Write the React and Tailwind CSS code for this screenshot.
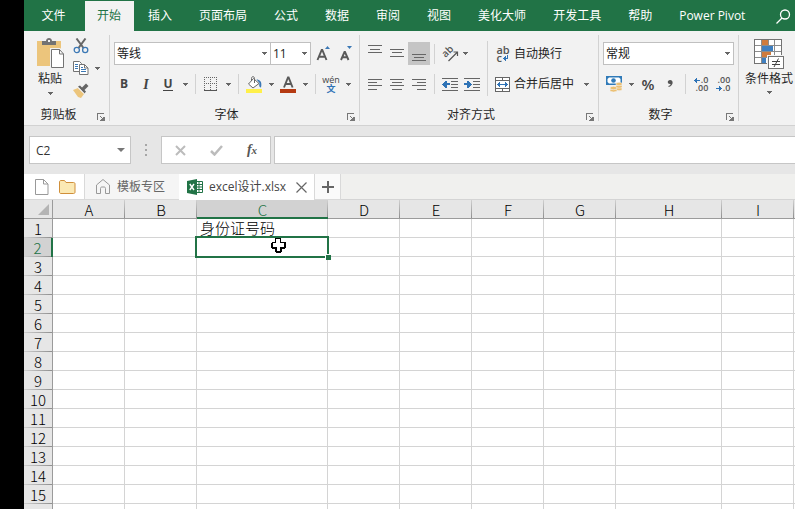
import React from "react";

const UI_FONT = "font-['Open_Sans','Noto_Sans_CJK_SC',sans-serif]";
const GRID_FONT = "font-['Noto_Sans_CJK_SC',sans-serif]";

const MENU = ["开始", "插入", "页面布局", "公式", "数据", "审阅", "视图", "美化大师", "开发工具", "帮助", "Power Pivot"];

const COLUMNS = [
  { name: "A", col: "w-[72px]" },
  { name: "B", col: "w-[72px]" },
  { name: "C", col: "w-[131px]" },
  { name: "D", col: "w-[72px]" },
  { name: "E", col: "w-[72px]" },
  { name: "F", col: "w-[72px]" },
  { name: "G", col: "w-[72px]" },
  { name: "H", col: "w-[106px]" },
  { name: "I", col: "w-[72px]" },
  { name: "", col: "w-[72px]" },
];

const ROWS = Array.from({ length: 15 }, (_, i) => i + 1);
const CELLS = { C1: "身份证号码" };

/* ---------- small building blocks ---------- */

function Caret() {
  return (
    <svg width="5" height="3" viewBox="0 0 5 3" shapeRendering="crispEdges" aria-hidden="true">
      <path d="M0 0h5v1H4v1H3v1H2V2H1V1H0z" fill="#666" />
    </svg>
  );
}

function CaretButton({ label, narrow }) {
  return (
    <button type="button" aria-label={label} className={`flex h-full items-center justify-center ${narrow ? "w-2" : "w-3"}`}>
      <Caret />
    </button>
  );
}

function Tool({ label, active, children }) {
  return (
    <button
      type="button"
      aria-label={label}
      className={`flex h-full w-[22px] shrink-0 items-center justify-center text-[#444] ${active ? "bg-[#c5c5c5]" : ""}`}
    >
      {children}
    </button>
  );
}

function Sep() {
  return <span className="mx-1 h-5 w-px shrink-0 bg-[#d2d2d2]" />;
}

function Divider() {
  return <span className="mt-1 h-[86px] w-px shrink-0 bg-[#d2d2d2]" />;
}

function Picker({ label, value, width }) {
  return (
    <div className={`relative h-[23px] shrink-0 ${width}`}>
      <select
        aria-label={label}
        defaultValue={value}
        className="block h-full w-full appearance-none border border-[#c0c0c0] bg-white pl-0.5 text-[12px] text-[#222]"
      >
        <option>{value}</option>
      </select>
      <span className="pointer-events-none absolute inset-y-0 right-1 flex items-center">
        <Caret />
      </span>
    </div>
  );
}

function Group({ title, width, children }) {
  return (
    <section aria-label={title} className={`flex shrink-0 flex-col ${width}`}>
      {children}
      <div className="mt-auto flex h-5 items-start">
        <span className="flex-1 text-center leading-5">{title}</span>
        <button type="button" aria-label={`${title}设置`} className="flex h-5 w-4 items-center justify-center pt-1">
          <svg width="8" height="8" viewBox="0 0 8 8" fill="#777" shapeRendering="crispEdges">
            <path d="M0 0h7v1H1v6H0zM3 3h1v1h1v1h1V4h1v3H4V6h1V5H4V4H3zM7 4h1v4H3V7h4z" />
          </svg>
        </button>
      </div>
    </section>
  );
}

function Lines({ rows, h = 16 }) {
  return (
    <svg width="14" height={h} viewBox={`0 0 14 ${h}`} fill="#666" shapeRendering="crispEdges">
      {rows.map(([x, y, w]) => (
        <rect key={y} x={x} y={y} width={w} height="1" />
      ))}
    </svg>
  );
}

/* ---------- ribbon icons ---------- */

function PasteIcon() {
  return (
    <svg width="30" height="32" viewBox="0 0 30 32">
      <rect x="2" y="3" width="24" height="25" fill="#ecc57c" />
      <path d="M7 7V3h4c0-4 6-4 6 0h4v4z" fill="#737373" />
      <rect x="13" y="2" width="2" height="2" fill="#f2f2f2" />
      <path d="M16.500 11.500h8l4 4.500v13.500h-12z" fill="#fff" stroke="#f2f2f2" strokeWidth="3" />
      <path d="M16.500 11.500h8l4 4.500v13.500h-12z" fill="#fff" stroke="#737373" />
      <path d="M24.500 11.500v4.500h4" fill="none" stroke="#737373" />
    </svg>
  );
}

function CutIcon() {
  return (
    <svg width="16" height="16" viewBox="0 0 16 16" fill="none">
      <path d="M3.500 0.500L10.500 10M12.500 0.500L5.500 10" stroke="#666" strokeWidth="2" />
      <circle cx="3.800" cy="12" r="2.600" stroke="#3b78b5" strokeWidth="1.300" />
      <circle cx="12.200" cy="12" r="2.600" stroke="#3b78b5" strokeWidth="1.300" />
    </svg>
  );
}

function CopyIcon() {
  return (
    <svg width="16" height="15" viewBox="0 0 16 15" fill="none">
      <path d="M0.500 0.500h6l2 2v8h-8z" fill="#fff" stroke="#737373" />
      <path d="M2 3.500h3M2 5.500h3M2 7.500h3" stroke="#3b78b5" />
      <path d="M6.500 3.500h5l3.500 3.500v6.500H6.500z" fill="#fff" stroke="#737373" />
      <path d="M11.500 3.500V7H15" stroke="#737373" />
      <path d="M8 6.500h2M8 8.500h5M8 10.500h5" stroke="#3b78b5" />
    </svg>
  );
}

function BrushIcon() {
  return (
    <svg width="16" height="15" viewBox="0 0 16 15">
      <path d="M0 7l5-2 6 6-3 4-3-1z" fill="#ecc57c" />
      <path d="M5 3.500l2-1 6 6-1.500 2zM9 4.500l4-4 2.500 2.500-4 4z" fill="#666" />
      <path d="M5.500 5l5.500 5.500" stroke="#f2f2f2" />
    </svg>
  );
}

function FontSizeIcon({ up }) {
  return (
    <svg width="16" height="18" viewBox="0 0 16 18" fill="none">
      <path
        d={up ? "M1.500 15L5.700 5h0.600L10.500 15M3 11.700h6" : "M3 15L6.500 7h0.500L10.500 15M4.300 12.300h5"}
        stroke="#595959"
        strokeWidth="1.900"
      />
      <path d={up ? "M9 4l2.500-3 2.500 3z" : "M9 1h5l-2.500 3z"} fill="#3b78b5" />
    </svg>
  );
}

function BorderIcon() {
  return (
    <svg width="14" height="14" viewBox="0 0 14 14" fill="none" stroke="#666" shapeRendering="crispEdges">
      <path d="M0 0.500h13M0 6.500h13M0.500 0v13M6.500 0v13M12.500 0v13" strokeDasharray="1 1" />
      <path d="M0 13.500h13" stroke="#555" />
    </svg>
  );
}

function FillIcon() {
  return (
    <svg width="17" height="17" viewBox="0 0 17 17" fill="none">
      <path d="M7.500 2.500L2.500 8l4.500 4L13 7.500z" fill="#fff" stroke="#666" />
      <path d="M5.500 5V2.500c0-2.500 3-2.500 3 0V7" stroke="#666" />
      <path d="M10.500 3.500c3 0 6 2 4.500 8-2 0-2-3-1.500-4.500z" fill="#3b78b5" />
      <rect x="0" y="13" width="16" height="4" fill="#fff04a" />
    </svg>
  );
}

function FontColorIcon() {
  return (
    <svg width="17" height="17" viewBox="0 0 17 17" fill="none">
      <path d="M4 11.500L8 1.500h0.600L12.600 11.500M5.300 8h6" stroke="#595959" strokeWidth="1.900" />
      <rect x="0" y="13" width="16" height="4" fill="#b53a12" />
    </svg>
  );
}

function OrientationIcon() {
  return (
    <span className="relative flex size-[18px] shrink-0 items-center justify-center">
      <span className="absolute top-0 left-0 -rotate-45 text-[10px] leading-[12px] font-semibold text-[#555]">ab</span>
      <svg width="18" height="18" viewBox="0 0 18 18" fill="none">
        <path d="M7.500 16L16 7.500M12.500 7H16.500V11" stroke="#555" strokeWidth="1.200" />
      </svg>
    </span>
  );
}

function IndentIcon({ right }) {
  return (
    <svg width="16" height="13" viewBox="0 0 16 13" shapeRendering="crispEdges">
      <path d="M0 0h16v1H0zM9 3h7v1H9zM9 6h7v1H9zM9 9h7v1H9zM0 12h16v1H0z" fill="#666" />
      <path
        d={right ? "M0 5h3V3h2v1h1v1h1v1h1v1H7v1H6v1H5v1H3V7H0z" : "M8 5H5V3H3v1H2v1H1v1H0v1h1v1h1v1h1v1h2V7h3z"}
        fill="#2f73b6"
      />
    </svg>
  );
}

function WrapIcon() {
  return (
    <span className="flex flex-col items-start text-[11px] leading-[8px] font-semibold text-[#555]">
      <span>ab</span>
      <span className="flex items-center">
        c
        <svg className="ml-px" width="5" height="6" viewBox="0 0 5 6" fill="#2f73b6" shapeRendering="crispEdges">
          <path d="M4 0h1v4H3v2H2V5H1V4H0V3h1V2h1V1h1v2h1z" />
        </svg>
      </span>
    </span>
  );
}

function MergeIcon() {
  return (
    <svg width="15" height="15" viewBox="0 0 15 15" fill="#fff" stroke="#666" shapeRendering="crispEdges">
      <path d="M0.500 0.500h14v14H0.500zM0.500 3.500h14M0.500 11.500h14M7.500 0.500v3M7.500 11.500v3" />
      <path d="M3 7.500h9" stroke="#2f73b6" />
      <path d="M2 7h1V6h1V5h1v5H4V9H3V8H2zM13 7h-1V6h-1V5h-1v5h1V9h1V8h1z" fill="#2f73b6" stroke="none" />
    </svg>
  );
}

function MoneyIcon() {
  return (
    <svg width="16" height="16" viewBox="0 0 16 16">
      <path d="M0 0h16v9H0z" fill="#2f7ab8" />
      <path d="M1.500 3l1.500-1.500h10L14.500 3v3L13 7.500H3L1.500 6z" fill="#fff" />
      <circle cx="7.500" cy="4.500" r="2.300" fill="#2f7ab8" />
      <g fill="#ecbf70" stroke="#f2f2f2" strokeWidth="0.600">
        <ellipse cx="13" cy="13" rx="3.200" ry="1.700" />
        <ellipse cx="13" cy="10.500" rx="3.200" ry="1.700" />
        <ellipse cx="13" cy="8" rx="3.200" ry="1.700" />
        <ellipse cx="7.500" cy="14.300" rx="3.500" ry="1.700" />
        <ellipse cx="7.500" cy="12" rx="3.500" ry="1.700" />
      </g>
    </svg>
  );
}

function DecimalArrow({ right }) {
  return (
    <svg width="6" height="5" viewBox="0 0 6 5" fill="#2f73b6" shapeRendering="crispEdges">
      <path d={right ? "M0 2h3V0h1v1h1v1h1v1H5v1H4v1H3V3H0z" : "M6 2H3V0H2v1H1v1H0v1h1v1h1v1h1V3h3z"} />
    </svg>
  );
}

function DecimalIcon({ more }) {
  return (
    <span className="flex flex-col items-end text-[9px] leading-[8px] font-semibold text-[#555]">
      <span className="flex items-center gap-px">
        {more && <DecimalArrow />}
        {more ? ".0" : ".00"}
      </span>
      <span className="flex items-center gap-px">
        {!more && <DecimalArrow right />}
        {more ? ".00" : ".0"}
      </span>
    </span>
  );
}

function ConditionalIcon() {
  return (
    <svg width="31" height="31" viewBox="0 0 31 31" shapeRendering="crispEdges">
      <rect x="0.500" y="0.500" width="27" height="24" fill="#fff" stroke="#737373" />
      <path d="M1 6.500h26M1 12.500h26M1 18.500h26M7.500 1v23M14.500 1v23M20.500 1v23" stroke="#8c8c8c" />
      <rect x="8" y="1" width="6" height="5" fill="#cf7b3c" />
      <rect x="8" y="7" width="11" height="5" fill="#3f7fc0" />
      <rect x="8" y="13" width="9" height="5" fill="#cf7b3c" />
      <rect x="8" y="19" width="4" height="5" fill="#3f7fc0" />
      <rect x="13" y="16" width="18" height="15" fill="#f2f2f2" />
      <rect x="14.500" y="17.500" width="15" height="12" fill="#fff" stroke="#737373" />
      <g shapeRendering="auto" fill="none" stroke="#444">
        <path d="M18 22.500h8M18 25.500h8M24.500 19.500l-4.500 8.500" />
      </g>
    </svg>
  );
}

/* ---------- ribbon ---------- */

function MenuBar() {
  return (
    <nav aria-label="功能区" className="flex h-[31px] items-stretch gap-0.5 overflow-hidden bg-[#217346] pt-px text-white">
      <button type="button" className="w-[59px] shrink-0 pb-px">文件</button>
      {MENU.map((name, i) => (
        <button
          key={name}
          type="button"
          className={`shrink-0 whitespace-nowrap pr-[13px] pb-px pl-3 ${i === 0 ? "bg-[#f2f2f2] text-[#217346]" : ""}`}
        >
          {name}
        </button>
      ))}
      <button type="button" aria-label="搜索" className="ml-auto flex shrink-0 items-center pr-1">
        <svg width="15" height="15" viewBox="0 0 15 15" fill="none" stroke="#fff" strokeWidth="1.300">
          <circle cx="9" cy="5.500" r="4.500" />
          <path d="M6 9l-5.500 5.500" />
        </svg>
      </button>
    </nav>
  );
}

function Ribbon() {
  return (
    <div className="flex h-[95px] overflow-hidden border-b border-[#d2d2d2] bg-[#f2f2f2] text-[#262626]">
      <Group title="剪贴板" width="w-[85px]">
        <div className="flex pt-[7px] pl-[11px]">
          <button type="button" className="flex w-[30px] flex-col items-center whitespace-nowrap">
            <PasteIcon />
            <span className="leading-[18px]">粘贴</span>
            <span className="flex h-[7px] items-end"><Caret /></span>
          </button>
          <div className="ml-2 flex flex-col gap-[7px]">
            <button type="button" aria-label="剪切"><CutIcon /></button>
            <div className="flex items-center gap-1.5">
              <button type="button" aria-label="复制"><CopyIcon /></button>
              <button type="button" aria-label="复制选项"><Caret /></button>
            </div>
            <button type="button" aria-label="格式刷"><BrushIcon /></button>
          </div>
        </div>
      </Group>
      <Divider />

      <Group title="字体" width="w-[249px]">
        <div className="flex flex-col gap-[7px] pt-[11px]">
          <div className="flex h-[23px] items-center pl-1">
            <Picker label="字体名称" value="等线" width="w-[157px]" />
            <div className="-ml-px"><Picker label="字号" value="11" width="w-[41px]" /></div>
            <span className="w-0.5" />
            <Tool label="增大字号"><FontSizeIcon up /></Tool>
            <Tool label="减小字号"><FontSizeIcon /></Tool>
          </div>
          <div className="flex h-6 items-center pl-[3px]">
            <Tool label="加粗"><span className="text-[12px] font-bold">B</span></Tool>
            <Tool label="倾斜"><span className="font-['Liberation_Serif',serif] text-[14px] font-bold italic">I</span></Tool>
            <Tool label="下划线"><span className="border-b border-[#444] text-[12px] leading-[13px] font-bold">U</span></Tool>
            <CaretButton label="下划线选项" />
            <Sep />
            <Tool label="边框"><BorderIcon /></Tool>
            <CaretButton label="边框选项" />
            <Sep />
            <Tool label="填充颜色"><FillIcon /></Tool>
            <CaretButton label="填充颜色选项" />
            <Tool label="字体颜色"><FontColorIcon /></Tool>
            <CaretButton label="字体颜色选项" />
            <Sep />
            <Tool label="拼音">
              <span className="flex flex-col items-center">
                <span className="text-[9px] leading-[9px]">wén</span>
                <span className="text-[9px] leading-[9px] font-bold text-[#2f73b6]">文</span>
              </span>
            </Tool>
            <CaretButton label="拼音选项" />
          </div>
        </div>
      </Group>
      <Divider />

      <Group title="对齐方式" width="w-[238px]">
        <div className="flex pl-1">
          <div className="flex flex-col gap-[7px] pt-[11px]">
            <div className="flex h-[23px] items-center">
              <Tool label="顶端对齐"><Lines h={17} rows={[[0, 0, 14], [2, 4, 10], [0, 7, 14]]} /></Tool>
              <Tool label="垂直居中"><Lines h={17} rows={[[0, 4, 14], [2, 7, 10], [0, 11, 14]]} /></Tool>
              <Tool label="底端对齐" active><Lines h={17} rows={[[0, 9, 14], [2, 12, 10], [0, 15, 14]]} /></Tool>
              <Sep />
              <Tool label="方向"><OrientationIcon /></Tool>
              <CaretButton label="方向选项" narrow />
            </div>
            <div className="flex h-6 items-center">
              <Tool label="左对齐"><Lines h={12} rows={[[0, 1, 14], [0, 4, 9], [0, 7, 14], [0, 11, 9]]} /></Tool>
              <Tool label="居中"><Lines h={12} rows={[[0, 1, 14], [2, 4, 10], [0, 7, 14], [2, 11, 10]]} /></Tool>
              <Tool label="右对齐"><Lines h={12} rows={[[0, 1, 14], [5, 4, 9], [0, 7, 14], [5, 11, 9]]} /></Tool>
              <Sep />
              <Tool label="减少缩进量"><IndentIcon /></Tool>
              <Tool label="增加缩进量"><IndentIcon right /></Tool>
            </div>
          </div>
          <span className="mx-1 mt-2.5 h-[55px] w-px bg-[#d2d2d2]" />
          <div className="flex flex-col gap-[7px] pt-[11px]">
            <button type="button" className="flex h-[23px] items-center">
              <span className="flex w-[22px] justify-center"><WrapIcon /></span>
              自动换行
            </button>
            <div className="flex h-6 items-center">
              <button type="button" className="flex items-center">
                <span className="flex w-[22px] pl-[3px]"><MergeIcon /></span>
                合并后居中
              </button>
              <span className="w-1.5" />
              <CaretButton label="合并选项" />
            </div>
          </div>
        </div>
      </Group>
      <Divider />

      <Group title="数字" width="w-[139px]">
        <div className="flex flex-col gap-[7px] pt-[11px] pl-1">
          <Picker label="数字格式" value="常规" width="w-[131px]" />
          <div className="flex h-6 items-center">
            <Tool label="会计数字格式"><MoneyIcon /></Tool>
            <CaretButton label="会计数字格式选项" />
            <Tool label="百分比样式"><span className="text-[15px] font-semibold">%</span></Tool>
            <Tool label="千位分隔样式">
              <svg width="7" height="10" viewBox="0 0 7 10" fill="#555">
                <path d="M3 1c4 0 3.500 6-1.500 7V7c1.500-.5 2-1 2-2C0 5.500 0 1 3 1z" />
              </svg>
            </Tool>
            <Sep />
            <Tool label="增加小数位数"><DecimalIcon more /></Tool>
            <Tool label="减少小数位数"><DecimalIcon /></Tool>
          </div>
        </div>
      </Group>
      <Divider />

      <button type="button" className="flex shrink-0 flex-col items-center self-start whitespace-nowrap pt-2 pl-1.5">
        <ConditionalIcon />
        <span className="leading-[18px]">条件格式</span>
        <span className="flex h-1.5 items-end"><Caret /></span>
      </button>
    </div>
  );
}

/* ---------- formula bar ---------- */

function FormulaBar() {
  return (
    <div className="flex h-12 items-center bg-[#e6e6e6] pl-[5px]">
      <div className="relative h-7 w-[102px] shrink-0">
        <input
          aria-label="名称框"
          defaultValue="C2"
          className="h-full w-full border border-[#c6c6c6] bg-white pl-1.5 text-[12px] text-[#333]"
        />
        <button type="button" aria-label="名称列表" className="absolute inset-y-0 right-1.5 flex items-center">
          <svg width="8" height="4" viewBox="0 0 8 4"><path d="M0 0h8L4 4z" fill="#777" /></svg>
        </button>
      </div>
      <span className="flex w-[30px] shrink-0 flex-col items-center gap-[3px]">
        <i className="size-0.5 bg-[#a6a6a6]" />
        <i className="size-0.5 bg-[#a6a6a6]" />
        <i className="size-0.5 bg-[#a6a6a6]" />
      </span>
      <div className="flex h-7 w-[110px] shrink-0 items-center justify-around border border-[#c6c6c6] bg-white">
        <button type="button" aria-label="取消" className="flex w-9 justify-center">
          <svg width="11" height="11" viewBox="0 0 11 11" stroke="#bcbcbc" strokeWidth="2"><path d="M1 1l9 9M10 1l-9 9" /></svg>
        </button>
        <button type="button" aria-label="输入" className="flex w-9 justify-center">
          <svg width="13" height="11" viewBox="0 0 13 11" fill="none" stroke="#bcbcbc" strokeWidth="2.500"><path d="M1 6l3.500 3.500L12 1" /></svg>
        </button>
        <button
          type="button"
          aria-label="插入函数"
          className="flex w-9 items-baseline justify-center font-['Liberation_Serif',serif] leading-4 font-bold text-[#555] italic"
        >
          <span className="text-[14px]">f</span>
          <span className="text-[11px]">x</span>
        </button>
      </div>
      <input aria-label="编辑栏" className="ml-[3px] h-7 min-w-0 flex-1 border border-r-0 border-[#c6c6c6] bg-white px-1.5" />
    </div>
  );
}

/* ---------- workbook tabs ---------- */

function WorkbookTabs() {
  return (
    <div className="flex h-[26px] items-stretch bg-[#f0f0ee]">
      <div className="flex w-[61px] items-center gap-2.5 border-r border-b border-[#d9d9d9] bg-white pl-[11px]">
        <button type="button" aria-label="新建">
          <svg width="14" height="16" viewBox="0 0 14 16" fill="none" stroke="#999"><path d="M0.500 0.500h8l4.500 4.500v10.500H0.500zM8.500 0.500V5H13" /></svg>
        </button>
        <button type="button" aria-label="打开">
          <svg width="17" height="14" viewBox="0 0 17 14" fill="#fbe9b4" stroke="#d08f3a">
            <path d="M0.500 2c0-1 .5-1.500 1.500-1.500h3.500L7 2.500h7.500c1 0 1.500.5 1.500 1.500v8c0 1-.5 1.500-1.500 1.500H2c-1 0-1.500-.5-1.500-1.500z" />
          </svg>
        </button>
      </div>
      <button type="button" className="flex w-[94px] items-center gap-[7px] border-b border-[#d9d9d9] bg-[#f5f5f5] pl-[11px] text-[#666]">
        <svg width="14" height="15" viewBox="0 0 14 15" fill="none" stroke="#999">
          <path d="M0.500 6L7 0.500 13.500 6v8.500h-4v-5c0-1-.5-1.500-1.500-1.500H6c-1 0-1.500.5-1.500 1.500v5h-4z" />
        </svg>
        模板专区
      </button>
      <div className="flex items-center border-r border-[#d9d9d9] bg-white pr-[7px] pl-2 text-[#444]">
        <svg width="16" height="16" viewBox="0 0 16 16">
          <path d="M8.500 2.500h7v11h-7z" fill="#fff" stroke="#217346" />
          <path d="M9 5.500h6M9 8h6M9 10.500h6M12 3v10" stroke="#217346" />
          <path d="M0 2l10-2v16L0 14z" fill="#217346" />
          <path d="M2.800 5l4.200 6M7 5l-4.200 6" stroke="#fff" strokeWidth="1.400" />
        </svg>
        <span className="ml-1.5 whitespace-nowrap">excel设计.xlsx</span>
        <button type="button" aria-label="关闭" className="ml-2.5">
          <svg width="11" height="11" viewBox="0 0 11 11" stroke="#666" strokeWidth="1.200"><path d="M0.500 0.500l10 10M10.500 0.500l-10 10" /></svg>
        </button>
      </div>
      <button type="button" aria-label="新建标签" className="flex w-[26px] items-center justify-center border-r border-b border-[#d9d9d9] bg-[#fafafa]">
        <svg width="12" height="12" viewBox="0 0 12 12" fill="#666" shapeRendering="crispEdges"><path d="M0 5h12v2H0zM5 0h2v12H5z" /></svg>
      </button>
      <span className="flex-1 border-b border-[#d4d4d4]" />
    </div>
  );
}

/* ---------- sheet ---------- */

function Selection() {
  return (
    <>
      <span className="pointer-events-none absolute -top-0.5 -right-0.5 -bottom-0.5 -left-0.5 z-10 border-2 border-[#217346]" />
      <span className="pointer-events-none absolute -right-1 -bottom-1 z-10 size-1.5 border-t border-l border-white bg-[#217346]" />
      <svg className="pointer-events-none absolute top-0 left-[74px] z-20" width="15" height="15" viewBox="0 0 15 15" shapeRendering="crispEdges">
        <path d="M4 0h6v4h5v6h-1v1h-3v3h-1v1H5v-1H4v-3H1v-1H0V5h1V4h3z" fill="#000" />
        <path d="M5 1h4v4h4v4H9v4H6v-4H2V5h3z" fill="#fff" />
      </svg>
    </>
  );
}

function Sheet() {
  return (
    <div className="min-h-0 flex-1 overflow-hidden bg-white">
      <table className={`w-[842px] table-fixed border-separate border-spacing-0 text-[15px] leading-[18px] text-black ${GRID_FONT}`}>
        <colgroup>
          <col className="w-[29px]" />
          {COLUMNS.map((c, i) => (
            <col key={i} className={c.col} />
          ))}
        </colgroup>
        <thead>
          <tr className="h-[19px]">
            <td className="h-[19px] border-r border-b border-[#9b9b9b] bg-[#e6e6e6] p-0">
              <svg className="mr-[3px] ml-auto block" width="11" height="11" viewBox="0 0 11 11"><path d="M11 0v11H0z" fill="#b4b4b4" /></svg>
            </td>
            {COLUMNS.map((c, i) => (
              <th
                key={i}
                scope="col"
                className={`h-[19px] bg-linear-to-b from-[#d0d0d0] to-[#8f8f8f] bg-[length:1px_100%] bg-right bg-no-repeat px-0 pb-0 font-light ${
                  c.name === "C"
                    ? "border-b-2 border-[#217346] bg-[#d2d2d2] pt-[3px] leading-[14px] text-[#217346]"
                    : "border-b border-[#9b9b9b] bg-[#e6e6e6] pt-0.5 leading-4"
                }`}
              >
                {c.name}
              </th>
            ))}
          </tr>
        </thead>
        <tbody>
          {ROWS.map((r) => (
            <tr key={r} className="h-[19px]">
              <th
                scope="row"
                className={`h-[19px] bg-linear-to-r from-[#d0d0d0] to-[#8f8f8f] bg-[length:100%_1px] bg-bottom bg-no-repeat p-0 leading-[19px] font-light ${
                  r === 2 ? "border-r-2 border-[#217346] bg-[#d2d2d2] text-[#217346]" : "border-r border-[#9b9b9b] bg-[#e6e6e6]"
                }`}
              >
                {r}
              </th>
              {COLUMNS.map((c, i) => {
                const ref = c.name + r;
                return (
                  <td key={i} className="relative h-[19px] border-r border-b border-[#d4d4d4] py-0 pr-0 pl-[3px] font-light whitespace-nowrap">
                    {CELLS[ref]}
                    {ref === "C2" && <Selection />}
                  </td>
                );
              })}
            </tr>
          ))}
          <tr className="h-[19px]">
            <th scope="row" aria-label="16" className="h-[19px] border-r border-[#9b9b9b] bg-[#e6e6e6] p-0" />
            {COLUMNS.map((c, i) => (
              <td key={i} className="h-[19px] border-r border-b border-[#d4d4d4] p-0" />
            ))}
          </tr>
        </tbody>
      </table>
    </div>
  );
}

export default function App() {
  return (
    <div className="flex h-screen overflow-hidden bg-black pl-6">
      <main className={`flex min-w-0 flex-1 flex-col text-[12px] ${UI_FONT}`}>
        <MenuBar />
        <Ribbon />
        <FormulaBar />
        <WorkbookTabs />
        <Sheet />
      </main>
    </div>
  );
}
